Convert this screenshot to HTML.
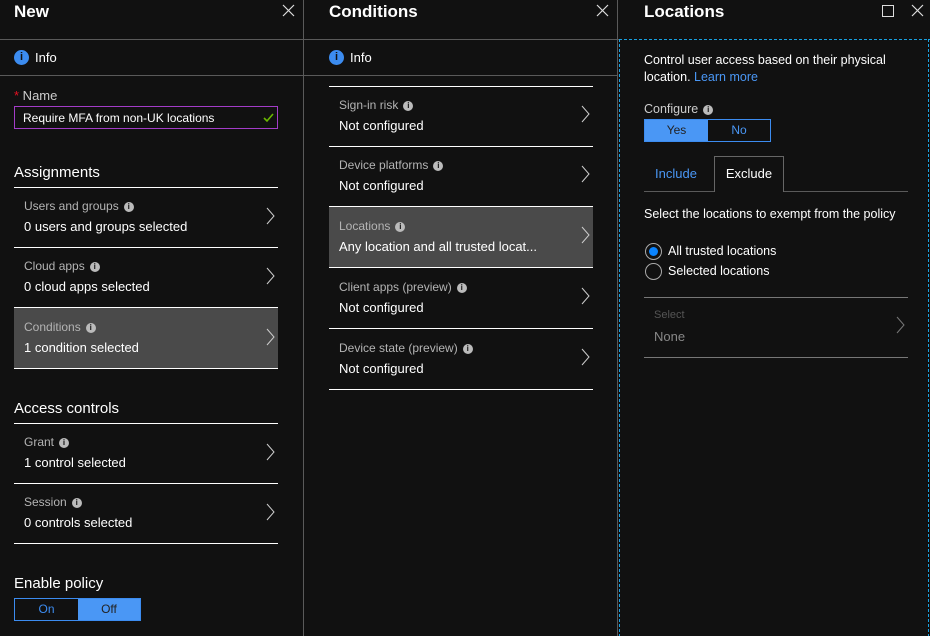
<!DOCTYPE html>
<html><head><meta charset="utf-8"><style>
*{margin:0;padding:0;box-sizing:border-box}
html,body{width:930px;height:636px;overflow:hidden}
body{background:#111;position:relative;font-family:"Liberation Sans",sans-serif;color:#fff}
.a{position:absolute;white-space:nowrap}
.t{font-size:17px;font-weight:bold}
.h{font-size:15px}
.lab{font-size:12px;color:#b4b4b4}
.val{font-size:13px;color:#fff}
.ln{position:absolute;height:1px;background:#fff}
.gl{position:absolute;background:#5a5a5a}
.sel{position:absolute;background:#4a4a4a}
.i{display:inline-block;width:10px;height:10px;border-radius:50%;background:#bbb;color:#111;font-size:8px;font-weight:bold;text-align:center;line-height:10px;vertical-align:1px;margin-left:5px}
.info{display:flex;align-items:center;font-size:13px}
.bi{display:inline-block;width:15px;height:15px;border-radius:50%;background:#3c8cf0;color:#111;font-size:11px;font-weight:bold;text-align:center;line-height:15px;margin-right:6px}
.chev{position:absolute;width:9px;height:18px}
.dh{position:absolute;height:1px;background:repeating-linear-gradient(90deg,#1aa0e0 0 3px,transparent 3px 5px)}
.dv{position:absolute;width:1px;background:repeating-linear-gradient(180deg,#1aa0e0 0 3px,transparent 3px 5px)}
</style></head><body>
<!-- dividers -->
<div class="gl" style="left:303px;top:0;width:1px;height:636px"></div>
<div class="gl" style="left:617px;top:0;width:1px;height:636px"></div>
<div class="gl" style="left:0;top:39px;width:619px;height:1px"></div>
<div class="gl" style="left:0;top:75px;width:617px;height:1px"></div>
<div class="dh" style="left:619px;top:39px;width:311px"></div>
<div class="dv" style="left:619px;top:39px;height:597px"></div>
<div class="dv" style="left:928px;top:39px;height:597px"></div>

<!-- Panel 1 -->
<div class="a t" style="left:14px;top:2px">New</div>
<svg class="a" style="left:282px;top:4px" width="13" height="13"><path d="M1 1L12 12M12 1L1 12" stroke="#ddd" stroke-width="1.2"/></svg>
<div class="a info" style="left:14px;top:50px"><span class="bi">i</span>Info</div>
<div class="a" style="left:14px;top:88px;font-size:13px;color:#ccc"><span style="color:#e81123">*</span> Name</div>
<div class="a" style="left:14px;top:106px;width:264px;height:23px;border:1px solid #a33cc8;font-size:12px;padding:4px 8px">Require MFA from non-UK locations</div>
<svg class="a" style="left:263px;top:113px" width="11" height="10"><path d="M1 5L4 8L10 1" stroke="#6bb700" stroke-width="1.6" fill="none"/></svg>
<div class="a h" style="left:14px;top:164px">Assignments</div>
<div class="ln" style="left:14px;top:187px;width:264px"></div>
<div class="a lab" style="left:24px;top:199px">Users and groups<span class="i">i</span></div>
<div class="a val" style="left:24px;top:219px">0 users and groups selected</div>
<div class="ln" style="left:14px;top:247px;width:264px"></div>
<div class="a lab" style="left:24px;top:259px">Cloud apps<span class="i">i</span></div>
<div class="a val" style="left:24px;top:279px">0 cloud apps selected</div>
<div class="sel" style="left:14px;top:308px;width:264px;height:60px"></div>
<div class="ln" style="left:14px;top:307px;width:264px"></div>
<div class="a lab" style="left:24px;top:320px">Conditions<span class="i">i</span></div>
<div class="a val" style="left:24px;top:340px">1 condition selected</div>
<div class="ln" style="left:14px;top:368px;width:264px"></div>
<div class="a h" style="left:14px;top:400px">Access controls</div>
<div class="ln" style="left:14px;top:423px;width:264px"></div>
<div class="a lab" style="left:24px;top:435px">Grant<span class="i">i</span></div>
<div class="a val" style="left:24px;top:455px">1 control selected</div>
<div class="ln" style="left:14px;top:483px;width:264px"></div>
<div class="a lab" style="left:24px;top:495px">Session<span class="i">i</span></div>
<div class="a val" style="left:24px;top:515px">0 controls selected</div>
<div class="ln" style="left:14px;top:543px;width:264px"></div>
<div class="a h" style="left:14px;top:575px">Enable policy</div>
<div class="a" style="left:14px;top:598px;width:127px;height:23px;border:1px solid #3c8cf0;font-size:12px">
<div style="position:absolute;left:0;top:0;width:63px;height:21px;text-align:center;line-height:21px;color:#3c8cf0">On</div>
<div style="position:absolute;left:63px;top:0;width:62px;height:21px;background:#4a97f5;text-align:center;line-height:21px;color:#222">Off</div></div>

<svg class="chev" style="left:266px;top:207px"><path d="M1 1L8 9L1 17" stroke="#ccc" fill="none"/></svg>
<svg class="chev" style="left:266px;top:267px"><path d="M1 1L8 9L1 17" stroke="#ccc" fill="none"/></svg>
<svg class="chev" style="left:266px;top:328px"><path d="M1 1L8 9L1 17" stroke="#ccc" fill="none"/></svg>
<svg class="chev" style="left:266px;top:443px"><path d="M1 1L8 9L1 17" stroke="#ccc" fill="none"/></svg>
<svg class="chev" style="left:266px;top:503px"><path d="M1 1L8 9L1 17" stroke="#ccc" fill="none"/></svg>

<!-- Panel 2 -->
<div class="a t" style="left:329px;top:2px">Conditions</div>
<svg class="a" style="left:596px;top:4px" width="13" height="13"><path d="M1 1L12 12M12 1L1 12" stroke="#ddd" stroke-width="1.2"/></svg>
<div class="a info" style="left:329px;top:50px"><span class="bi">i</span>Info</div>
<div class="ln" style="left:329px;top:86px;width:264px"></div>
<div class="a lab" style="left:339px;top:98px">Sign-in risk<span class="i">i</span></div>
<div class="a val" style="left:339px;top:118px">Not configured</div>
<div class="ln" style="left:329px;top:146px;width:264px"></div>
<div class="a lab" style="left:339px;top:158px">Device platforms<span class="i">i</span></div>
<div class="a val" style="left:339px;top:178px">Not configured</div>
<div class="sel" style="left:329px;top:207px;width:264px;height:60px"></div>
<div class="ln" style="left:329px;top:206px;width:264px"></div>
<div class="a lab" style="left:339px;top:219px">Locations<span class="i">i</span></div>
<div class="a val" style="left:339px;top:239px">Any location and all trusted locat...</div>
<div class="ln" style="left:329px;top:267px;width:264px"></div>
<div class="a lab" style="left:339px;top:280px">Client apps (preview)<span class="i">i</span></div>
<div class="a val" style="left:339px;top:300px">Not configured</div>
<div class="ln" style="left:329px;top:328px;width:264px"></div>
<div class="a lab" style="left:339px;top:341px">Device state (preview)<span class="i">i</span></div>
<div class="a val" style="left:339px;top:361px">Not configured</div>
<div class="ln" style="left:329px;top:389px;width:264px"></div>
<svg class="chev" style="left:581px;top:105px"><path d="M1 1L8 9L1 17" stroke="#ccc" fill="none"/></svg>
<svg class="chev" style="left:581px;top:165px"><path d="M1 1L8 9L1 17" stroke="#ccc" fill="none"/></svg>
<svg class="chev" style="left:581px;top:226px"><path d="M1 1L8 9L1 17" stroke="#ccc" fill="none"/></svg>
<svg class="chev" style="left:581px;top:287px"><path d="M1 1L8 9L1 17" stroke="#ccc" fill="none"/></svg>
<svg class="chev" style="left:581px;top:348px"><path d="M1 1L8 9L1 17" stroke="#ccc" fill="none"/></svg>

<!-- Panel 3 -->
<div class="a t" style="left:644px;top:2px">Locations</div>
<div class="a" style="left:882px;top:5px;width:12px;height:12px;border:1px solid #ddd"></div>
<svg class="a" style="left:911px;top:4px" width="13" height="13"><path d="M1 1L12 12M12 1L1 12" stroke="#ddd" stroke-width="1.2"/></svg>
<div class="a" style="left:644px;top:52px;font-size:12.5px;line-height:17px">Control user access based on their physical<br>location. <span style="color:#4a97f5">Learn more</span></div>
<div class="a" style="left:644px;top:102px;font-size:12.5px;color:#ccc">Configure<span class="i">i</span></div>
<div class="a" style="left:644px;top:119px;width:127px;height:23px;border:1px solid #3c8cf0;font-size:12px">
<div style="position:absolute;left:0;top:0;width:63px;height:21px;background:#4a97f5;text-align:center;line-height:21px;color:#222">Yes</div>
<div style="position:absolute;left:63px;top:0;width:62px;height:21px;text-align:center;line-height:21px;color:#4a97f5">No</div></div>
<div class="a" style="left:655px;top:166px;font-size:13px;color:#4a97f5">Include</div>
<div class="a" style="left:714px;top:156px;width:70px;height:36px;border:1px solid #666;border-bottom:none;background:#111;font-size:13px;text-align:center;line-height:34px">Exclude</div>
<div class="gl" style="left:644px;top:191px;width:70px;height:1px"></div>
<div class="gl" style="left:784px;top:191px;width:124px;height:1px"></div>
<div class="a" style="left:644px;top:207px;font-size:12.5px">Select the locations to exempt from the policy</div>
<div class="a" style="left:645px;top:243px;width:17px;height:17px;border:1px solid #aaa;border-radius:50%"><div style="position:absolute;left:3px;top:3px;width:9px;height:9px;border-radius:50%;background:#0a84ff"></div></div>
<div class="a" style="left:668px;top:244px;font-size:12.5px">All trusted locations</div>
<div class="a" style="left:645px;top:263px;width:17px;height:17px;border:1px solid #aaa;border-radius:50%"></div>
<div class="a" style="left:668px;top:264px;font-size:12.5px">Selected locations</div>
<div class="gl" style="left:644px;top:297px;width:264px;height:1px;background:#777"></div>
<div class="a" style="left:654px;top:309px;font-size:11px;color:#555">Select</div>
<div class="a" style="left:654px;top:329px;font-size:13px;color:#888">None</div>
<svg class="chev" style="left:896px;top:316px"><path d="M1 1L8 9L1 17" stroke="#777" fill="none"/></svg>
<div class="gl" style="left:644px;top:357px;width:264px;height:1px;background:#777"></div>
</body></html>
